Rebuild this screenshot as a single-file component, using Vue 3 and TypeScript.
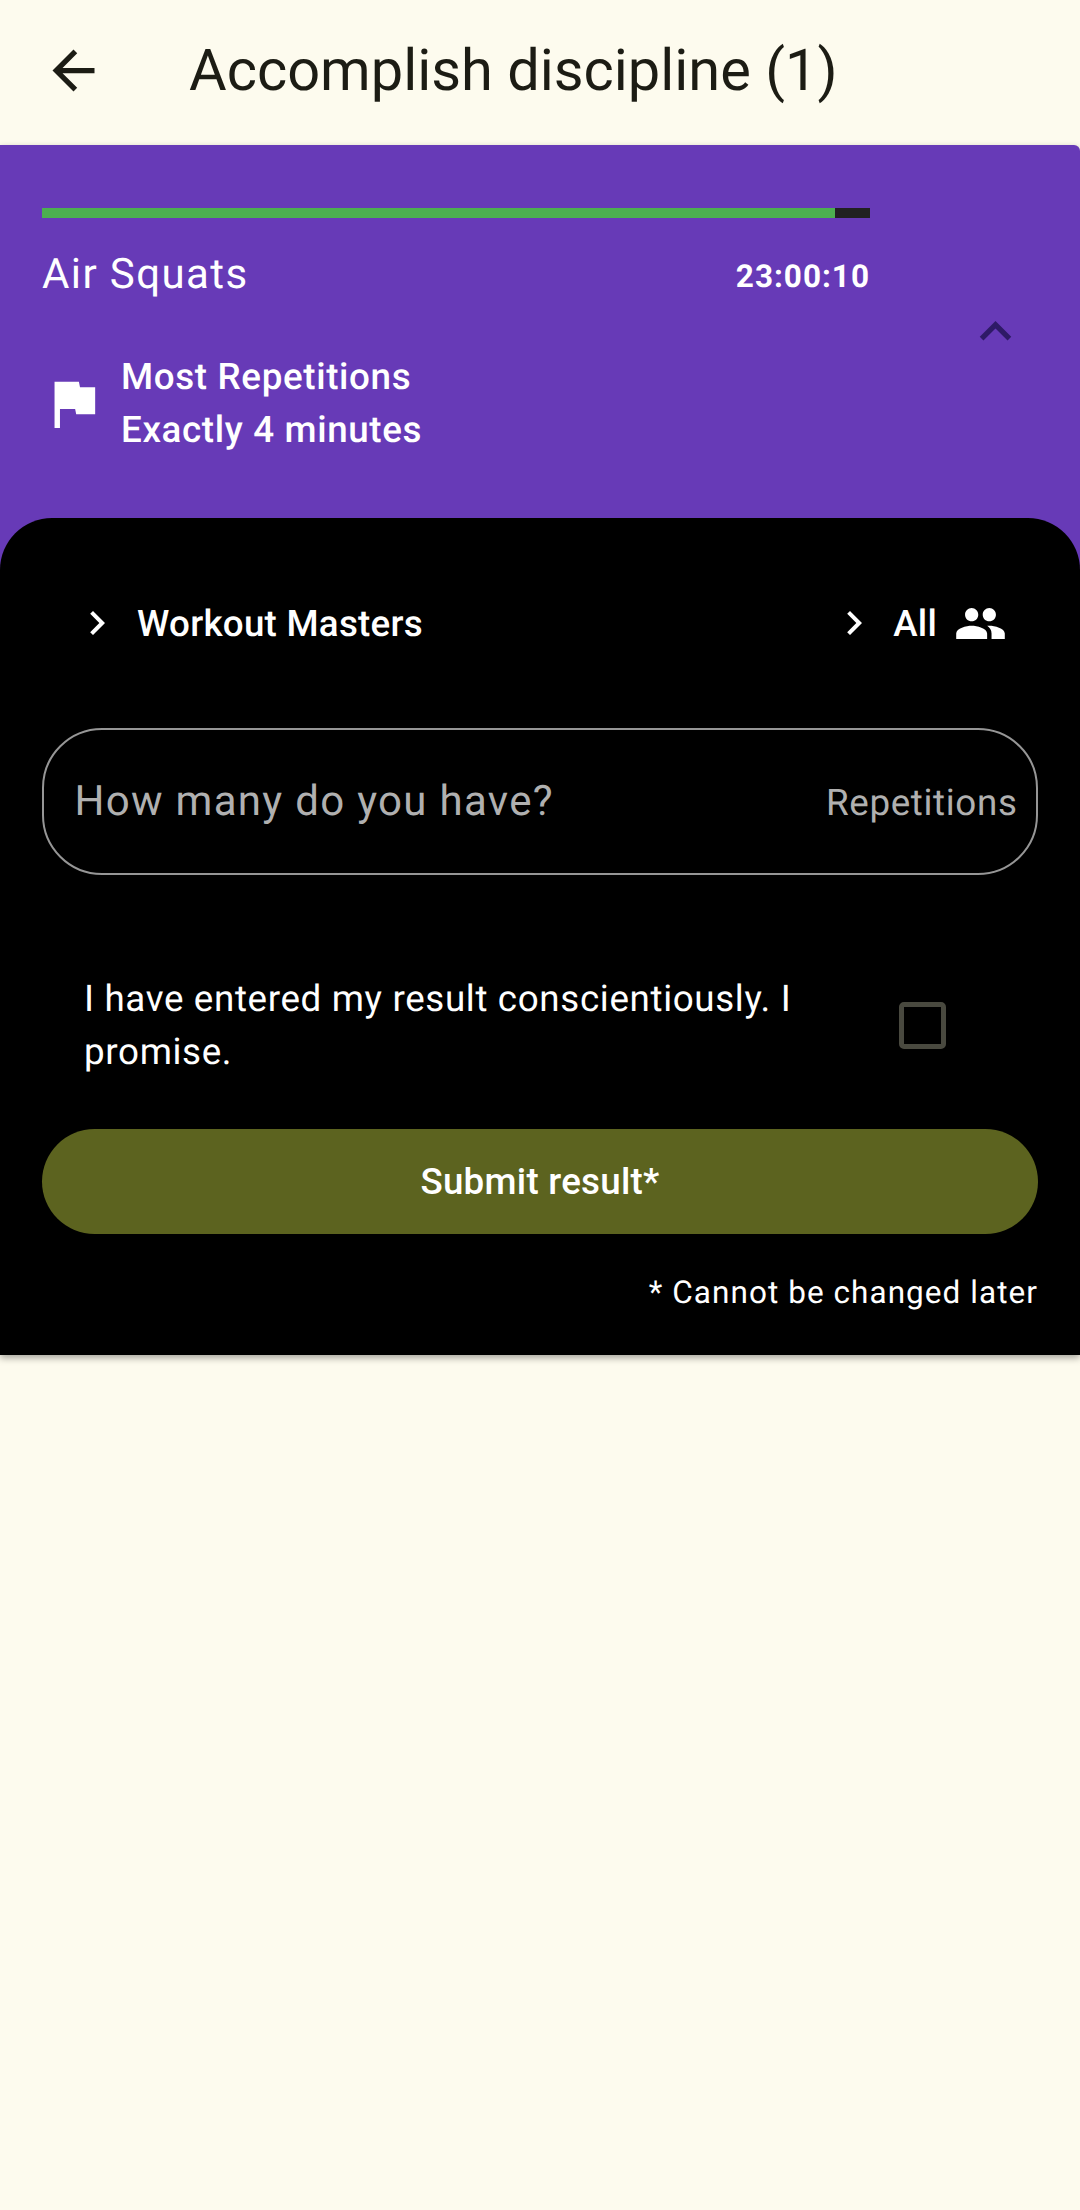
<script setup lang="ts">
const progress = 95.8
</script>

<template>
  <div class="page">
    <header class="bar">
      <svg class="back" viewBox="0 0 24 24"><path d="M20 11H7.83l5.59-5.59L12 4l-8 8 8 8 1.41-1.41L7.83 13H20v-2z" /></svg>
      <h1 class="title">Accomplish discipline (1)</h1>
    </header>

    <section class="card">
      <div class="head">
        <div class="head-main">
          <div class="track"><div class="fill" :style="{ width: progress + '%' }"></div></div>
          <div class="name-row">
            <span class="name">Air Squats</span>
            <span class="timer">23:00:10</span>
          </div>
          <div class="rule">
            <svg class="flag" viewBox="0 0 24 24"><path d="M14.4 6L14 4H5v17h2v-7h5.6l.4 2h7V6z" /></svg>
            <div class="rule-text">
              <div>Most Repetitions</div>
              <div>Exactly 4 minutes</div>
            </div>
          </div>
        </div>
        <svg class="less" viewBox="0 0 24 24"><path d="M12 8l-6 6 1.41 1.41L12 10.83l4.59 4.58L18 14z" /></svg>
      </div>

      <div class="panel">
        <div class="filters">
          <div class="filter">
            <svg class="chev" viewBox="0 0 24 24"><path d="M10 6L8.59 7.41 13.17 12l-4.58 4.59L10 18l6-6z" /></svg>
            <span>Workout Masters</span>
          </div>
          <div class="filter">
            <svg class="chev" viewBox="0 0 24 24"><path d="M10 6L8.59 7.41 13.17 12l-4.58 4.59L10 18l6-6z" /></svg>
            <span>All</span>
            <svg class="people" viewBox="0 0 24 24"><path d="M16 11c1.66 0 2.99-1.34 2.99-3S17.66 5 16 5c-1.66 0-3 1.34-3 3s1.34 3 3 3zm-8 0c1.66 0 2.99-1.34 2.99-3S9.66 5 8 5C6.34 5 5 6.34 5 8s1.34 3 3 3zm0 2c-2.33 0-7 1.17-7 3.5V19h14v-2.5c0-2.33-4.67-3.5-7-3.5zm8 0c-.29 0-.62.02-.97.05 1.16.84 1.97 1.97 1.97 3.45V19h6v-2.5c0-2.33-4.67-3.5-7-3.5z" /></svg>
          </div>
        </div>

        <div class="field">
          <span class="placeholder">How many do you have?</span>
          <span class="suffix">Repetitions</span>
        </div>

        <div class="promise">
          <p class="promise-text">I have entered my result conscientiously. I promise.</p>
          <span class="box"></span>
        </div>

        <button class="submit" type="button">Submit result*</button>
        <p class="note">* Cannot be changed later</p>
      </div>
    </section>
  </div>
</template>

<style>
html, body { margin: 0; background: #fdfbee; }
</style>

<style scoped>
.page {
  width: 1080px;
  height: 2210px;
  background: #fdfbee;
  font-family: Roboto, "Liberation Sans", sans-serif;
  text-rendering: geometricPrecision;
  overflow: hidden;
}
.bar {
  height: 145px;
  display: flex;
  align-items: center;
  padding-left: 42px;
  box-sizing: border-box;
}
.back { width: 63px; height: 63px; fill: #1c1c14; flex: none; margin-top: -4px; }
.title {
  margin: -4px 0 0 84px;
  font-size: 57.75px;
  font-weight: 400;
  color: #1c1c14;
}
.card {
  background: #673ab7;
  border-radius: 0 6px 0 0;
  box-shadow: 0 3px 7px rgba(0, 0, 0, 0.35);
}
.head {
  height: 373px;
  box-sizing: border-box;
  padding: 63px 0 0 42px;
  display: flex;
  align-items: center;
  position: relative;
}
.head-main { width: 828px; align-self: flex-start; }
.track { height: 10px; background: #212121; }
.fill { height: 100%; background: #4caf50; }
.name-row {
  margin-top: 28.5px;
  display: flex;
  justify-content: space-between;
  align-items: center;
  color: #fff;
  height: 56px;
}
.name { font-size: 42px; letter-spacing: 1.4px; }
.timer { font-size: 31.5px; font-weight: 700; letter-spacing: 1px; margin-top: 4px; }
.rule { margin-top: 47.5px; display: flex; align-items: center; color: #fff; }
.flag { width: 65px; height: 65px; fill: #fff; flex: none; margin-left: -1px; margin-right: 15px; }
.rule-text { font-size: 36.75px; font-weight: 500; line-height: 53px; letter-spacing: 0.65px; }
.less {
  width: 63px;
  height: 63px;
  fill: #2e1a66;
  margin-left: 93.5px;
  margin-top: -63px;
  flex: none;
}
.panel {
  background: #000;
  border-radius: 52px 52px 0 0;
  height: 837px;
  box-sizing: border-box;
  padding: 0 42px;
  color: #fff;
}
.filters {
  padding-top: 81px;
  height: 210px;
  box-sizing: border-box;
  display: flex;
  justify-content: space-between;
  font-size: 36.75px;
  font-weight: 500;
  letter-spacing: 0.25px;
}
.filter { display: flex; align-items: center; height: 48px; }
.chev { width: 48px; height: 48px; fill: #fff; flex: none; margin-left: 31px; margin-right: 16px; }
.filter:last-child .chev { margin-left: 0; margin-right: 15px; }
.people { width: 53px; height: 53px; fill: #fff; flex: none; margin-left: 17px; margin-right: 31px; }
.field {
  height: 147px;
  margin-bottom: -1px;
  box-sizing: border-box;
  border: 2px solid #969696;
  border-radius: 60px;
  display: flex;
  align-items: center;
  justify-content: space-between;
  padding: 0 18.5px 0 30.5px;
}
.placeholder { font-size: 42px; letter-spacing: 1.3px; color: #b0b0b0; }
.suffix { font-size: 36.75px; letter-spacing: 0.65px; color: #b0b0b0; margin-top: 2px; }
.promise {
  margin-top: 99px;
  display: flex;
  align-items: center;
  padding-left: 42px;
}
.promise-text {
  margin: 0;
  width: 770px;
  font-size: 36.75px;
  line-height: 52.5px;
  letter-spacing: 0.65px;
}
.box {
  margin-left: 45px;
  width: 47px;
  height: 47px;
  box-sizing: border-box;
  border: 5px solid #49493f;
  border-radius: 5px;
  flex: none;
}
.submit {
  display: block;
  width: 100%;
  height: 105px;
  margin-top: 51px;
  border: 0;
  border-radius: 53px;
  background: #5c631f;
  color: #fff;
  font-family: inherit;
  font-size: 36.75px;
  font-weight: 500;
  letter-spacing: 0.25px;
}
.note {
  margin: 41px 0 0;
  text-align: right;
  font-size: 31.5px;
  line-height: 36px;
  letter-spacing: 1.05px;
}
</style>
